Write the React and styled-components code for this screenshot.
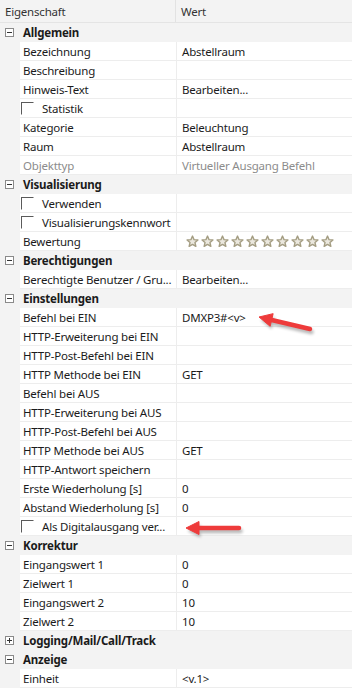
import React from 'react';
import styled, { createGlobalStyle } from 'styled-components';

const GlobalStyle = createGlobalStyle`
  html, body {
    margin: 0;
    padding: 0;
    background: #ffffff;
  }
  body {
    font-family: "Noto Sans", "Open Sans", "DejaVu Sans", sans-serif;
    font-size: 11.5px;
    letter-spacing: -0.2px;
  }
`;

const Grid = styled.div`
  position: relative;
  width: 352px;
  height: 691px;
  overflow: hidden;
  background: #ffffff;
`;

const Header = styled.div`
  display: grid;
  grid-template-columns: 176px 1fr;
  height: 23px;
  background: #f3f3f3;
  border-bottom: 1px solid #e4e4e4;
  box-sizing: border-box;
  color: #333;
`;

const HeadCell = styled.div`
  display: flex;
  align-items: center;
  padding-left: ${(p) => p.$pad}px;
  border-right: ${(p) => (p.$line ? '1px solid #e2e2e2' : 'none')};
`;

const Row = styled.div`
  display: grid;
  grid-template-columns: 20px 156px 1fr;
  height: 19px;
  background: ${(p) => (p.$category ? '#f3f3f3' : '#ffffff')};
`;

const Gutter = styled.div`
  background: #f3f3f3;
  display: flex;
  align-items: center;
  justify-content: center;
  padding-right: 2px;
`;

const NameCell = styled.div`
  display: flex;
  align-items: center;
  gap: 8px;
  padding-left: 3px;
  white-space: nowrap;
  overflow: hidden;
  color: ${(p) => (p.$dim ? '#8c8c8c' : '#1b1b1b')};
  font-weight: ${(p) => (p.$bold ? 700 : 400)};
  border-bottom: ${(p) => (p.$category ? 'none' : '1px solid #ededed')};
  box-sizing: border-box;
`;

const ValueCell = styled.div`
  display: flex;
  align-items: center;
  padding-left: 5px;
  white-space: nowrap;
  overflow: hidden;
  color: ${(p) => (p.$dim ? '#8c8c8c' : '#1b1b1b')};
  border-left: ${(p) => (p.$category ? 'none' : '1px solid #ededed')};
  border-bottom: ${(p) => (p.$category ? 'none' : '1px solid #ededed')};
  box-sizing: border-box;
`;

const Toggle = styled.div`
  width: 9px;
  height: 9px;
  border: 1px solid #8a8a8a;
  background: #fff;
  position: relative;
  box-sizing: border-box;
  &::before {
    content: '';
    position: absolute;
    left: 1px;
    right: 1px;
    top: 3px;
    height: 1px;
    background: #333;
  }
  &::after {
    content: '';
    display: ${(p) => (p.$open ? 'none' : 'block')};
    position: absolute;
    top: 1px;
    bottom: 1px;
    left: 3px;
    width: 1px;
    background: #333;
  }
`;

const Check = styled.span`
  display: inline-block;
  width: 13px;
  height: 13px;
  margin-left: -2px;
  border-top: 1px solid #5a5a5a;
  border-left: 1px solid #5a5a5a;
  border-right: 1px solid #ffffff;
  border-bottom: 1px solid #ffffff;
  box-sizing: border-box;
  flex-shrink: 0;
`;

const Stars = styled.div`
  display: flex;
  gap: 2px;
  padding-left: 4px;
`;

const Overlay = styled.svg`
  position: absolute;
  left: 0;
  top: 0;
  pointer-events: none;
`;

function Star() {
  return (
    <svg width="13" height="13" viewBox="0 0 24 24">
      <polygon
        points="12,2 14.9,8.6 22,9.3 16.6,14 18.2,21 12,17.3 5.8,21 7.4,14 2,9.3 9.1,8.6"
        fill="#ebe8de"
        stroke="#a49d82"
        strokeWidth="2.6"
        strokeLinejoin="round"
      />
    </svg>
  );
}

const rows = [
  { cat: 'Allgemein', open: true },
  { name: 'Bezeichnung', value: 'Abstellraum' },
  { name: 'Beschreibung' },
  { name: 'Hinweis-Text', value: 'Bearbeiten...' },
  { name: 'Statistik', check: true },
  { name: 'Kategorie', value: 'Beleuchtung' },
  { name: 'Raum', value: 'Abstellraum' },
  { name: 'Objekttyp', value: 'Virtueller Ausgang Befehl', dim: true },
  { cat: 'Visualisierung', open: true },
  { name: 'Verwenden', check: true },
  { name: 'Visualisierungskennwort', check: true },
  { name: 'Bewertung', stars: true },
  { cat: 'Berechtigungen', open: true },
  { name: 'Berechtigte Benutzer / Gru...', value: 'Bearbeiten...' },
  { cat: 'Einstellungen', open: true },
  { name: 'Befehl bei EIN', value: 'DMXP3#<v>' },
  { name: 'HTTP-Erweiterung bei EIN' },
  { name: 'HTTP-Post-Befehl bei EIN' },
  { name: 'HTTP Methode bei EIN', value: 'GET' },
  { name: 'Befehl bei AUS' },
  { name: 'HTTP-Erweiterung bei AUS' },
  { name: 'HTTP-Post-Befehl bei AUS' },
  { name: 'HTTP Methode bei AUS', value: 'GET' },
  { name: 'HTTP-Antwort speichern' },
  { name: 'Erste Wiederholung [s]', value: '0' },
  { name: 'Abstand Wiederholung [s]', value: '0' },
  { name: 'Als Digitalausgang ver...', check: true },
  { cat: 'Korrektur', open: true },
  { name: 'Eingangswert 1', value: '0' },
  { name: 'Zielwert 1', value: '0' },
  { name: 'Eingangswert 2', value: '10' },
  { name: 'Zielwert 2', value: '10' },
  { cat: 'Logging/Mail/Call/Track', open: false },
  { cat: 'Anzeige', open: true },
  { name: 'Einheit', value: '<v.1>' },
];

function Arrow({ x1, y1, x2, y2 }) {
  const a = Math.atan2(y2 - y1, x2 - x1);
  const len = 13;
  const w = 6.5;
  const bx = x2 - Math.cos(a) * len;
  const by = y2 - Math.sin(a) * len;
  const px = -Math.sin(a) * w;
  const py = Math.cos(a) * w;
  const head = `${x2},${y2} ${bx + px},${by + py} ${bx - px},${by - py}`;
  return (
    <g>
      <g opacity="0.28" transform="translate(1.5,3)" filter="url(#blur)">
        <line x1={x1} y1={y1} x2={bx} y2={by} stroke="#000" strokeWidth="4.5" strokeLinecap="round" />
        <polygon points={head} fill="#000" />
      </g>
      <line x1={x1} y1={y1} x2={bx} y2={by} stroke="#ee3b3b" strokeWidth="4.5" strokeLinecap="round" />
      <polygon points={head} fill="#ee3b3b" strokeLinejoin="round" stroke="#ee3b3b" strokeWidth="1" />
    </g>
  );
}

export default function App() {
  return (
    <>
      <GlobalStyle />
      <Grid>
        <Header>
          <HeadCell $pad={5} $line>Eigenschaft</HeadCell>
          <HeadCell $pad={5}>Wert</HeadCell>
        </Header>
        {rows.map((r, i) =>
          r.cat ? (
            <Row key={i} $category>
              <Gutter>
                <Toggle $open={r.open} />
              </Gutter>
              <NameCell $bold $category>{r.cat}</NameCell>
              <ValueCell $category />
            </Row>
          ) : (
            <Row key={i}>
              <Gutter />
              <NameCell $dim={r.dim}>
                {r.check && <Check />}
                {r.name}
              </NameCell>
              <ValueCell $dim={r.dim}>
                {r.stars ? (
                  <Stars>
                    {Array.from({ length: 10 }).map((_, k) => (
                      <Star key={k} />
                    ))}
                  </Stars>
                ) : (
                  r.value
                )}
              </ValueCell>
            </Row>
          )
        )}
        <Overlay width="352" height="691">
          <defs>
            <filter id="blur" x="-20%" y="-50%" width="140%" height="200%">
              <feGaussianBlur stdDeviation="1.5" />
            </filter>
          </defs>
          <Arrow x1={310} y1={329} x2={259} y2={317} />
          <Arrow x1={239} y1={528} x2={186} y2={528} />
        </Overlay>
      </Grid>
    </>
  );
}
